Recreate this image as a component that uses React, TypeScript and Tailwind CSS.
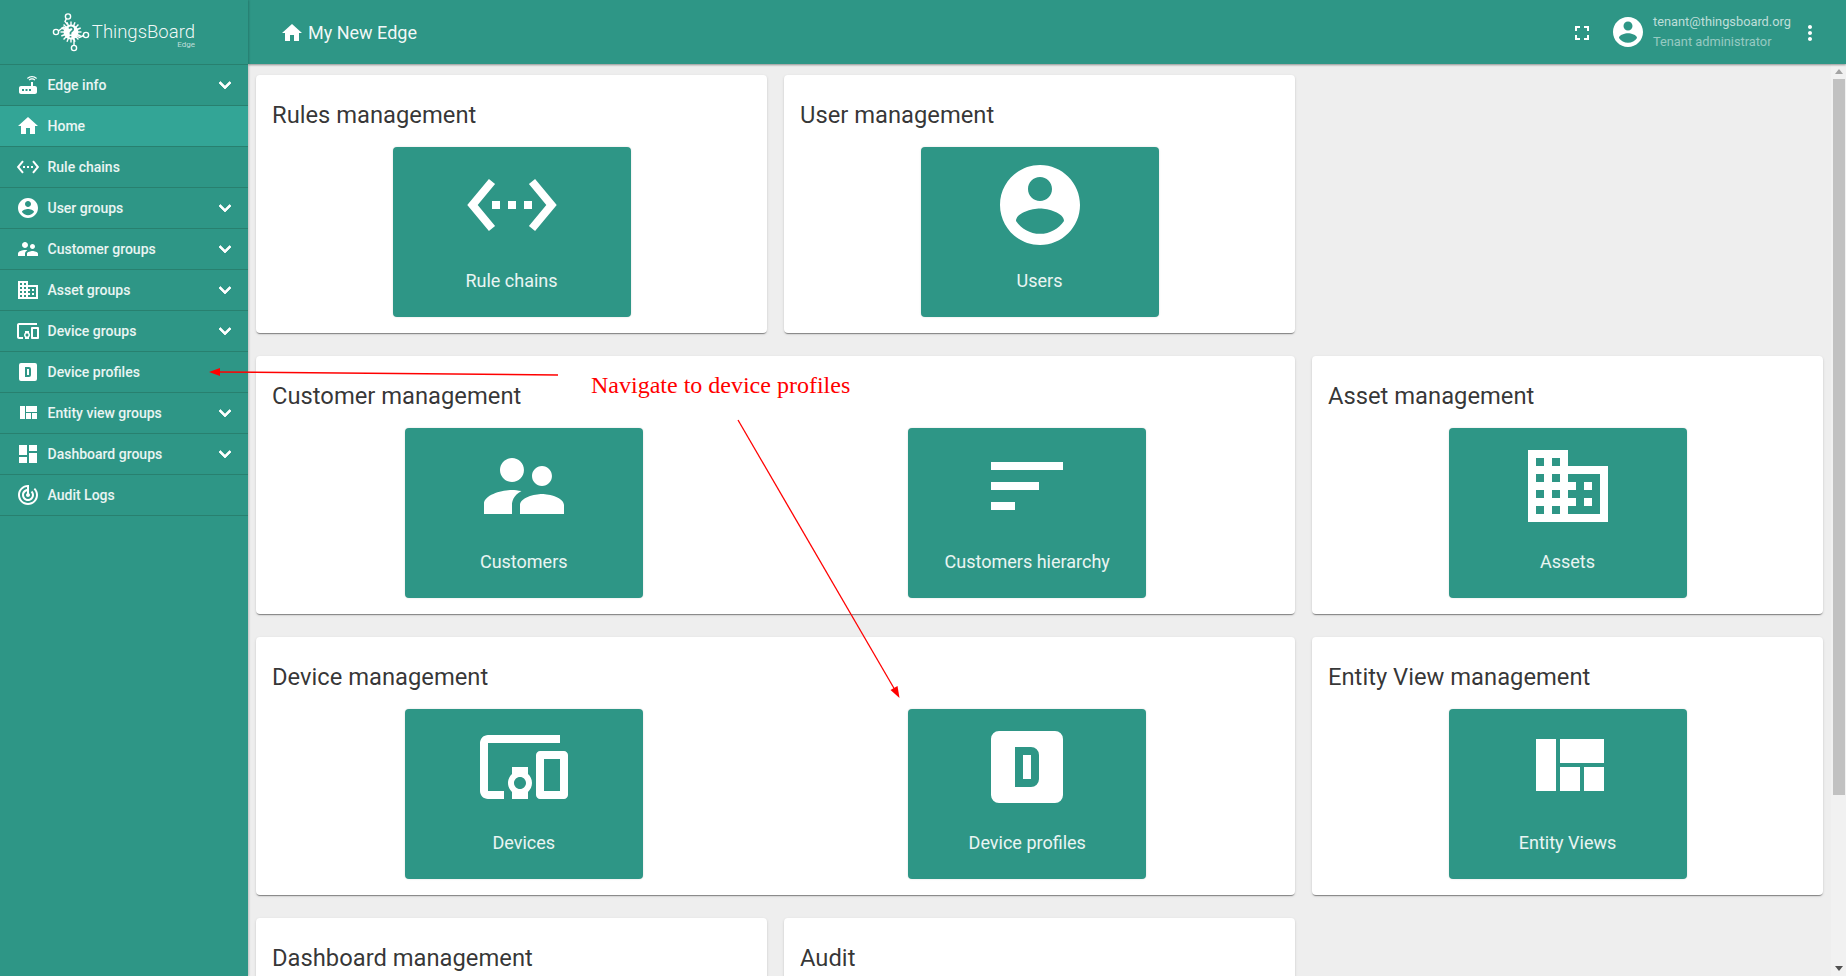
const P: Record<string, string> = {
  router: "M20.2 5.9l.8-.8C19.6 3.7 17.8 3 16 3s-3.6.7-5 2.1l.8.8C13 4.8 14.5 4.2 16 4.2s3 .6 4.2 1.7zm-.9.8c-.9-.9-2.1-1.4-3.3-1.4s-2.4.5-3.3 1.4l.8.8c.7-.7 1.6-1 2.5-1 .9 0 1.8.3 2.5 1l.8-.8zM19 13h-2V9h-2v4H5c-1.1 0-2 .9-2 2v4c0 1.1.9 2 2 2h14c1.1 0 2-.9 2-2v-4c0-1.1-.9-2-2-2zM8 18H6v-2h2v2zm3.5 0h-2v-2h2v2zm3.5 0h-2v-2h2v2z",
  home: "M10 20v-6h4v6h5v-8h3L12 3 2 12h3v8z",
  rule: "M7.77 6.76L6.23 5.48.82 12l5.41 6.52 1.54-1.28L3.42 12l4.35-5.24zM7 13h2v-2H7v2zm10-2h-2v2h2v-2zm-6 2h2v-2h-2v2zm6.77-7.52l-1.54 1.28L20.58 12l-4.35 5.24 1.54 1.28L23.18 12l-5.41-6.52z",
  user: "M12 2C6.48 2 2 6.48 2 12s4.48 10 10 10 10-4.48 10-10S17.52 2 12 2zm0 3c1.66 0 3 1.34 3 3s-1.34 3-3 3-3-1.34-3-3 1.34-3 3-3zm0 14.2c-2.5 0-4.71-1.28-6-3.22.03-1.99 4-3.08 6-3.08 1.99 0 5.97 1.09 6 3.08-1.29 1.94-3.5 3.22-6 3.22z",
  customers: "M16.5 12c1.38 0 2.49-1.12 2.49-2.5S17.88 7 16.5 7C15.12 7 14 8.12 14 9.5s1.12 2.5 2.5 2.5zM9 11c1.66 0 2.99-1.34 2.99-3S10.66 5 9 5C7.34 5 6 6.34 6 8s1.34 3 3 3zm7.5 3c-1.83 0-5.5.92-5.5 2.75V19h11v-2.25c0-1.83-3.67-2.75-5.5-2.75zM9 13c-2.33 0-7 1.17-7 3.5V19h7v-2.25c0-.85.33-2.34 2.37-3.47C10.5 13.1 9.66 13 9 13z",
  sort: "M3 18h6v-2H3v2zM3 6v2h18V6H3zm0 7h12v-2H3v2z",
  domain: "M12 7V3H2v18h20V7H12zM6 19H4v-2h2v2zm0-4H4v-2h2v2zm0-4H4V9h2v2zm0-4H4V5h2v2zm4 12H8v-2h2v2zm0-4H8v-2h2v2zm0-4H8V9h2v2zm0-4H8V5h2v2zm10 12h-8v-2h2v-2h-2v-2h2v-2h-2V9h8v10zm-2-8h-2v2h2v-2zm0 4h-2v2h2v-2z",
  devices: "M3 6h18V4H3c-1.1 0-2 .9-2 2v12c0 1.1.9 2 2 2h4v-2H3V6zm10 6H9v1.78c-.61.55-1 1.33-1 2.22s.39 1.67 1 2.22V20h4v-1.78c.61-.55 1-1.34 1-2.22s-.39-1.67-1-2.22V12zm-2 5.5c-.83 0-1.5-.67-1.5-1.5s.67-1.5 1.5-1.5 1.5.67 1.5 1.5-.67 1.5-1.5 1.5zM22 8h-6c-.5 0-1 .5-1 1v10c0 .5.5 1 1 1h6c.5 0 1-.5 1-1V9c0-.5-.5-1-1-1zm-1 10h-4v-8h4v8z",
  profile: "M9,7V17H13A2,2 0 0,0 15,15V9A2,2 0 0,0 13,7H9M11,9H13V15H11V9M5,3H19A2,2 0 0,1 21,5V19A2,2 0 0,1 19,21H5A2,2 0 0,1 3,19V5A2,2 0 0,1 5,3Z",
  quilt: "M10 18h5v-6h-5v6zm-6 0h5V5H4v13zm12 0h5v-6h-5v6zM10 5v6h11V5H10z",
  dashboard: "M3 13h8V3H3v10zm0 8h8v-6H3v6zm10 0h8V11h-8v10zm0-18v6h8V3h-8z",
  audit: "M19.07 4.93l-1.41 1.41C19.1 7.79 20 9.79 20 12c0 4.42-3.58 8-8 8s-8-3.58-8-8c0-4.08 3.05-7.44 7-7.93v2.02C8.16 6.57 6 9.03 6 12c0 3.31 2.69 6 6 6s6-2.69 6-6c0-1.66-.67-3.16-1.76-4.24l-1.41 1.41C15.55 9.9 16 10.9 16 12c0 2.21-1.79 4-4 4s-4-1.79-4-4c0-1.86 1.28-3.41 3-3.86v2.14c-.6.35-1 .98-1 1.72 0 1.1.9 2 2 2s2-.9 2-2c0-.74-.4-1.38-1-1.72V2h-1C6.48 2 2 6.48 2 12s4.48 10 10 10 10-4.48 10-10c0-2.76-1.12-5.26-2.93-7.07z",
  chevron: "M16.59 8.59L12 13.17 7.41 8.59 6 10l6 6 6-6z",
  fullscreen: "M7 14H5v5h5v-2H7v-3zm-2-4h2V7h3V5H5v5zm12 7h-3v2h5v-5h-2v3zM14 5v2h3v3h2V5h-5z",
  more: "M12 8c1.1 0 2-.9 2-2s-.9-2-2-2-2 .9-2 2 .9 2 2 2zm0 2c-1.1 0-2 .9-2 2s.9 2 2 2 2-.9 2-2-.9-2-2-2zm0 6c-1.1 0-2 .9-2 2s.9 2 2 2 2-.9 2-2-.9-2-2-2z",
};

function Icon({ name, className }: { name: string; className: string }) {
  return (
    <svg viewBox="0 0 24 24" className={className} fill="currentColor" fillRule="evenodd">
      <path d={P[name]} />
    </svg>
  );
}

function Logo() {
  const spikes = Array.from({ length: 16 }, (_, i) => (i * 360) / 16);
  return (
    <svg viewBox="0 0 40 40" className="h-[40px] w-[40px] shrink-0 text-white">
      <g stroke="currentColor" fill="none" strokeWidth="1.4">
        <circle cx="5" cy="20" r="2.6" />
        <circle cx="17" cy="4.5" r="2.6" />
        <circle cx="35" cy="23" r="2.6" />
        <circle cx="23" cy="36" r="2.6" />
        <path d="M7.5 19l5-4 3 2M15.5 6.5l-1.5 3 2.5 3M32.5 23.5l-4 2-2.5-1.5M23 33.5V28l-2-2" />
      </g>
      <g fill="currentColor">
        <circle cx="20" cy="20" r="7.5" />
        {spikes.map((a) => (
          <rect key={a} x="19.3" y="9.5" width="1.4" height="4" transform={`rotate(${a} 20 20)`} />
        ))}
      </g>
      <path d="M18 16.5c1.5-2 5-1 4 1.5l-2.5 2.5v2M19.5 24v1.5" stroke="#2d9686" strokeWidth="1.7" fill="none" />
    </svg>
  );
}

const nav: [string, string, boolean][] = [
  ["router", "Edge info", true],
  ["home", "Home", false],
  ["rule", "Rule chains", false],
  ["user", "User groups", true],
  ["customers", "Customer groups", true],
  ["domain", "Asset groups", true],
  ["devices", "Device groups", true],
  ["profile", "Device profiles", false],
  ["quilt", "Entity view groups", true],
  ["dashboard", "Dashboard groups", true],
  ["audit", "Audit Logs", false],
];

function Tile({ icon, label }: { icon: string; label: string }) {
  return (
    <div className="flex h-[170px] w-[238px] flex-col items-center rounded bg-[#2e9686] pt-[10px] text-white shadow-[0_0_2px_rgba(0,0,0,0.15)]">
      <Icon name={icon} className="h-24 w-24" />
      <div className="mt-[16px] text-[18px] leading-6 text-white/90">{label}</div>
    </div>
  );
}

function Card({ title, wide, tiles }: { title: string; wide?: boolean; tiles: [string, string][] }) {
  return (
    <section
      className={
        (wide ? "col-span-2 " : "") +
        "rounded bg-white px-4 pb-4 pt-6 shadow-[0_2px_1px_-1px_rgba(0,0,0,0.3),0_1px_1px_0_rgba(0,0,0,0.14),0_1px_3px_0_rgba(0,0,0,0.12)]"
      }
    >
      <h2 className="mb-4 text-[23.75px] font-normal leading-8 text-black/80">{title}</h2>
      <div className="flex">
        {tiles.map(([i, l]) => (
          <div key={l} className="flex flex-1 justify-center">
            <Tile icon={i} label={l} />
          </div>
        ))}
      </div>
    </section>
  );
}

function Scrollbar() {
  return (
    <div className="flex h-full w-[15px] shrink-0 flex-col items-center bg-[#f1f1f1]">
      <div className="flex h-[15px] w-full shrink-0 items-center justify-center">
        <div className="h-0 w-0 border-x-[4px] border-b-[5px] border-x-transparent border-b-[#a3a3a3]" />
      </div>
      <div className="h-[716px] w-[12px] shrink-0 bg-[#c1c1c1]" />
      <div className="flex-1" />
      <div className="flex h-[15px] w-full shrink-0 items-center justify-center">
        <div className="h-0 w-0 border-x-[4px] border-t-[5px] border-x-transparent border-t-[#505050]" />
      </div>
    </div>
  );
}

export default function App() {
  return (
    <div className="relative flex h-[976px] w-[1846px] overflow-hidden bg-[#eeeeee] font-['Roboto',sans-serif]">
      <aside className="z-20 h-full w-[248px] shrink-0 bg-[#2e9686] text-white shadow-[1px_0_2px_rgba(0,0,0,0.2)]">
        <div className="flex h-[65px] items-start border-b border-[#28806f] pl-[51px] pt-[12px]">
          <Logo />
          <div className="ml-[1px] mt-[8px] flex w-[103px] flex-col items-end">
            <div className="whitespace-nowrap text-[18.5px] font-light leading-[24px] text-white/95">ThingsBoard</div>
            <div className="-mt-[3px] text-[8px] leading-[8px] text-white/70">Edge</div>
          </div>
        </div>
        {nav.map(([icon, label, chev]) => (
          <div
            key={label}
            className={
              (label === "Home" ? "bg-[#33a596] " : "") +
              "flex h-[41px] items-center border-b border-[#28806f] pl-4 pr-[11px]"
            }
          >
            <Icon name={icon} className="h-6 w-6 shrink-0 text-white" />
            <span className="ml-[7.5px] flex-1 text-[14px] font-medium leading-5 text-white/90">{label}</span>
            {chev && (
              <Icon name="chevron" className="h-6 w-6 shrink-0 stroke-white stroke-[0.8px] text-white" />
            )}
          </div>
        ))}
      </aside>

      <div className="flex min-w-0 flex-1 flex-col">
        <header className="z-10 flex h-[64px] shrink-0 items-center bg-[#2e9686] pl-[32px] pr-6 text-white shadow-[0_1px_2px_rgba(0,0,0,0.4)]">
          <Icon name="home" className="mt-[1px] h-6 w-6" />
          <span className="ml-[4px] mt-[2px] text-[18px] leading-6 text-white/95">My New Edge</span>
          <div className="flex-1" />
          <Icon name="fullscreen" className="mr-[16px] mt-[2px] h-6 w-6" />
          <Icon name="user" className="h-9 w-9" />
          <div className="ml-[7px] flex w-[145px] flex-col text-[12.8px] leading-[20px]">
            <span className="text-white/70">tenant@thingsboard.org</span>
            <span className="text-white/50">Tenant administrator</span>
          </div>
          <Icon name="more" className="mt-[2px] h-6 w-6" />
        </header>
        <div className="flex min-h-0 flex-1">
          <main className="min-w-0 flex-1 overflow-hidden">
            <div className="grid grid-cols-3 gap-x-[17px] gap-y-[23px] px-2 py-[11px]">
              <Card title="Rules management" tiles={[["rule", "Rule chains"]]} />
              <Card title="User management" tiles={[["user", "Users"]]} />
              <div />
              <Card
                title="Customer management"
                wide
                tiles={[
                  ["customers", "Customers"],
                  ["sort", "Customers hierarchy"],
                ]}
              />
              <Card title="Asset management" tiles={[["domain", "Assets"]]} />
              <Card
                title="Device management"
                wide
                tiles={[
                  ["devices", "Devices"],
                  ["profile", "Device profiles"],
                ]}
              />
              <Card title="Entity View management" tiles={[["quilt", "Entity Views"]]} />
              <Card title="Dashboard management" tiles={[]} />
              <Card title="Audit" tiles={[]} />
            </div>
          </main>
          <Scrollbar />
        </div>
      </div>

      <svg className="pointer-events-none absolute left-0 top-0 z-30 h-[976px] w-[1846px]" viewBox="0 0 1846 976">
        <line x1="558" y1="375" x2="218" y2="372" stroke="#ff0000" strokeWidth="1.5" />
        <polygon points="209,372 220,368 220,376" fill="#ff0000" />
        <line x1="738" y1="420" x2="895" y2="690" stroke="#ff0000" strokeWidth="1.3" />
        <polygon points="899.5,698 890.5,690 897.5,686" fill="#ff0000" />
      </svg>
      <div className="pointer-events-none absolute left-[591px] top-[371px] z-30 font-['Liberation_Serif',serif] text-[24px] leading-7 text-[#ff0000]">
        Navigate to device profiles
      </div>
    </div>
  );
}
